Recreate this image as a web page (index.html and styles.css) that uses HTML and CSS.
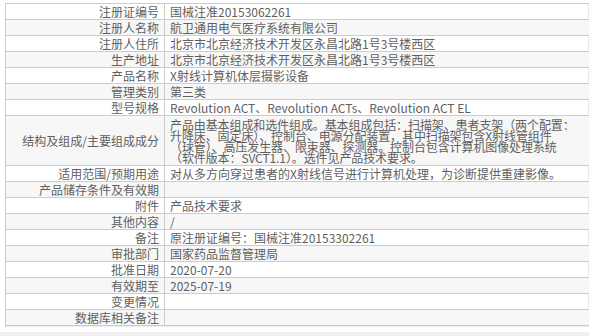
FILE: index.html
```html
<!DOCTYPE html>
<html lang="zh-CN">
<head>
<meta charset="utf-8">
<title>医疗器械注册信息</title>
<link rel="stylesheet" href="styles.css">
</head>
<body>
<div class="page">
  <div class="panel">
    <table class="info">
      <colgroup><col class="col-label"><col class="col-value"></colgroup>
      <tbody>
        <tr><th>注册证编号</th><td>国械注准20153062261</td></tr>
        <tr><th>注册人名称</th><td>航卫通用电气医疗系统有限公司</td></tr>
        <tr><th>注册人住所</th><td>北京市北京经济技术开发区永昌北路1号3号楼西区</td></tr>
        <tr><th>生产地址</th><td>北京市北京经济技术开发区永昌北路1号3号楼西区</td></tr>
        <tr><th>产品名称</th><td>X射线计算机体层摄影设备</td></tr>
        <tr><th>管理类别</th><td>第三类</td></tr>
        <tr><th>型号规格</th><td>Revolution ACT、Revolution ACTs、Revolution ACT EL</td></tr>
        <tr class="multi"><th>结构及组成/主要组成成分</th><td>产品由基本组成和选件组成。基本组成包括：扫描架、患者支架（两个配置：<br>升降床、固定床）、控制台、电源分配装置，其中扫描架包含X射线管组件<br>（球管）、高压发生器、限束器、探测器。控制台包含计算机图像处理系统<br>（软件版本：SVCT1.1）。选件见产品技术要求。</td></tr>
        <tr><th>适用范围/预期用途</th><td>对从多方向穿过患者的X射线信号进行计算机处理，为诊断提供重建影像。</td></tr>
        <tr><th>产品储存条件及有效期</th><td></td></tr>
        <tr><th>附件</th><td>产品技术要求</td></tr>
        <tr><th>其他内容</th><td>/</td></tr>
        <tr><th>备注</th><td>原注册证编号：国械注准20153302261</td></tr>
        <tr><th>审批部门</th><td>国家药品监督管理局</td></tr>
        <tr><th>批准日期</th><td>2020-07-20</td></tr>
        <tr><th>有效期至</th><td>2025-07-19</td></tr>
        <tr><th>变更情况</th><td></td></tr>
        <tr><th>数据库相关备注</th><td></td></tr>
      </tbody>
    </table>
  </div>
  <div class="footer"></div>
</div>
</body>
</html>
```
FILE: styles.css
```css
html, body {
  margin: 0;
  padding: 0;
  background: #ffffff;
}
.page {
  width: 589px;
  height: 336px;
  overflow: hidden;
  font-family: "Noto Sans CJK SC", "Noto Sans", sans-serif;
  font-size: 12px;
  color: #5f5f5f;
}
.panel {
  margin: 3px 0 0 5px;
  width: 583px;
  border-right: 1px solid #e6e9f3;
  border-bottom: 1px solid #eceef5;
}
.info {
  width: 583px;
  border-collapse: collapse;
  table-layout: fixed;
  border-top: 1px solid #cccccc;
}
.col-label { width: 159px; }
.col-value { width: 424px; }
.info th,
.info td {
  height: 15px;
  padding: 0 6px;
  line-height: 15px;
  border-bottom: 1px solid #cccccc;
  vertical-align: middle;
  font-weight: normal;
  white-space: nowrap;
  overflow: hidden;
}
.info th {
  text-align: right;
  border-left: 1px solid #cccccc;
  border-right: 1px solid #cccccc;
  padding-right: 5px;
}
.info td {
  text-align: left;
  padding-left: 5px;
}
.info tr:nth-child(even) th,
.info tr:nth-child(even) td {
  background: #f7f7f7;
}
.info tr.multi td {
  line-height: 11px;
  height: 48px;
  padding-top: 1px;
  padding-bottom: 0;
  letter-spacing: -0.1px;
}
.footer {
  margin-top: 5px;
  height: 8px;
  background: #f0f0f0;
}
```
